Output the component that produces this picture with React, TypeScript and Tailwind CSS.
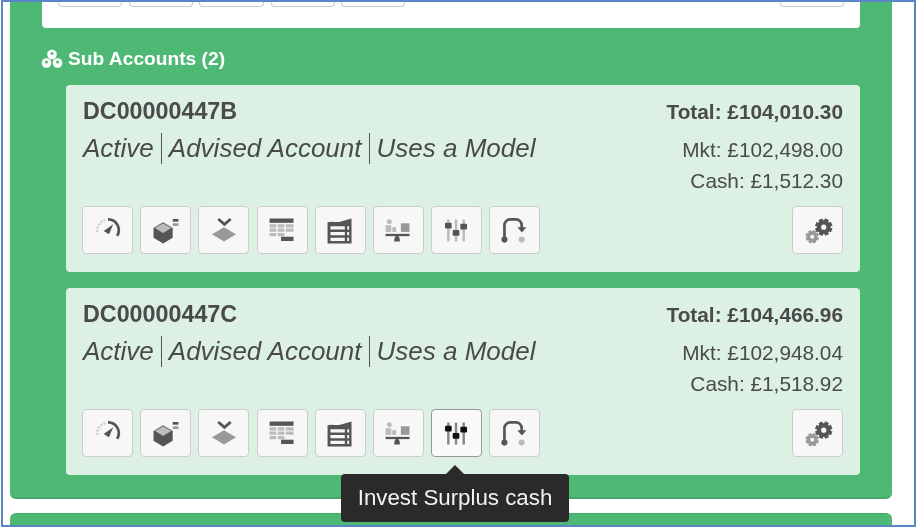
import type { ReactNode } from 'react'

const DARK = '#555'
const MID = '#999'
const LIGHT = '#bbb'

function IconSvg({ children }: { children: ReactNode }) {
  return (
    <svg viewBox="0 0 51 48" className="h-[46px] w-[49px] shrink-0">
      {children}
    </svg>
  )
}

const sliders = (line: string, knob: string) => (
  <>
    <path d="M17 13v23M25 13v23M33 13v23" stroke={line} strokeWidth="2.600" />
    <rect x="13.500" y="16.500" width="7" height="6" rx="1" fill={knob} />
    <rect x="21.500" y="24" width="7" height="6" rx="1" fill={knob} />
    <rect x="29.500" y="17.500" width="7" height="6" rx="1" fill={knob} />
  </>
)

const icons: ReactNode[] = [
  // gauge
  <>
    <path d="M26 13a11 11 0 0 1 9.500 17" fill="none" stroke={DARK} strokeWidth="2.800" />
    <path d="M15 26a11 11 0 0 1 9-12.500" fill="none" stroke="#ccc" strokeWidth="2.400" strokeDasharray="2 1.500" />
    <path d="M21.500 25l10-7-4.500 10.500z" fill={DARK} />
  </>,
  // cube with bars
  <>
    <path d="M13 22l10-6 10 6v10l-10 6-10-6z" fill={DARK} />
    <path d="M14.500 22l8.500-5 8.500 5-8.500 5z" fill="#bbb" />
    <rect x="33" y="12.500" width="6" height="2.800" fill={DARK} />
    <rect x="33" y="17" width="6" height="2.800" fill={MID} />
  </>,
  // chevron over diamond
  <>
    <path d="M20 12.500l6.500 5.500 6.500-5.500" fill="none" stroke={DARK} strokeWidth="3" />
    <path d="M26 21l12.500 7.500-12.500 7.500-12.500-7.500z" fill={MID} />
  </>,
  // table
  <>
    <rect x="12" y="12" width="25" height="4.500" fill={DARK} />
    <path d="M12 18h7v3.400h-7zM20.500 18h7v3.400h-7zM29 18h8v3.400h-8zM12 22.500h7v3.400h-7zM20.500 22.500h7v3.400h-7zM29 22.500h8v3.400h-8zM12 27h7v3.400h-7zM20.500 27h7v3.400h-7z" fill={LIGHT} />
    <rect x="24" y="31" width="13" height="4.500" fill={DARK} />
  </>,
  // wavy-top ledger
  <>
    <path d="M12 16c5-2 9 1 14-1 4-1 7-2 11-3v26H12z" fill={DARK} />
    <path d="M15 20h15v3.500H15zM15 26h15v3.500H15zM15 32h15v3.500H15zM32.500 20h2v3.500h-2zM32.500 26h2v3.500h-2zM32.500 32h2v3.500h-2z" fill="#f6f6f6" />
  </>,
  // balance
  <>
    <circle cx="16" cy="15.500" r="2.600" fill={LIGHT} />
    <rect x="12" y="19" width="6" height="7" fill={LIGHT} />
    <rect x="19" y="21" width="4" height="5" fill={LIGHT} />
    <rect x="28" y="17" width="9" height="9" fill={MID} />
    <rect x="12" y="28" width="25" height="2.400" fill={DARK} />
    <path d="M21 36c0-4 1-6 3-6s3 2 3 6z" fill={DARK} />
  </>,
  sliders(LIGHT, DARK),
  // route arrow
  <>
    <path d="M15 32V19a6 6 0 0 1 6-6h6a6 6 0 0 1 6 6v3" fill="none" stroke={DARK} strokeWidth="2.800" />
    <path d="M28.500 21h9.500l-4.750 5.500z" fill={DARK} />
    <circle cx="15" cy="34" r="3.200" fill={DARK} />
    <circle cx="33" cy="34" r="3.200" fill={LIGHT} />
  </>,
]

function Gear({ cx, cy, r, fill }: { cx: number; cy: number; r: number; fill: string }) {
  return (
    <g>
      <circle cx={cx} cy={cy} r={r * 0.55} fill="none" stroke={fill} strokeWidth={r * 0.5} />
      {[0, 45, 90, 135, 180, 225, 270, 315].map((deg) => (
        <rect
          key={deg}
          x={cx - r * 0.24}
          y={cy - r}
          width={r * 0.48}
          height={r * 0.4}
          fill={fill}
          transform={`rotate(${deg + 22} ${cx} ${cy})`}
        />
      ))}
    </g>
  )
}

function IconButton({ children, active }: { children: ReactNode; active?: boolean }) {
  return (
    <button
      className={
        active
          ? 'h-[48px] w-[51px] shrink-0 rounded border border-[#999] bg-[#fafafa]'
          : 'h-[48px] w-[51px] shrink-0 rounded border border-[#ccc] bg-[#f7f7f7]'
      }
    >
      {children}
    </button>
  )
}

function AccountCard({
  code,
  total,
  mkt,
  cash,
  activeIcon,
}: {
  code: string
  total: string
  mkt: string
  cash: string
  activeIcon?: number
}) {
  return (
    <div className="h-[187px] rounded bg-[#dcf1e4] px-[17px] pt-[13px] text-[#4a4a4a]">
      <div className="flex h-[108px] justify-between">
        <div>
          <div className="text-[23.300px] leading-[26px] font-bold">{code}</div>
          <div className="mt-[8px] flex items-center text-[26px] leading-[32px] italic">
            <span>Active</span>
            <span className="mx-[7px] h-[31px] w-px bg-[#555]" />
            <span>Advised Account</span>
            <span className="mx-[7px] h-[31px] w-px bg-[#555]" />
            <span>Uses a Model</span>
          </div>
        </div>
        <div className="text-right text-[20.800px]">
          <div className="mt-px leading-[26px] font-bold">Total: {total}</div>
          <div className="mt-[10px] leading-[30px]">Mkt: {mkt}</div>
          <div className="leading-[31px]">Cash: {cash}</div>
        </div>
      </div>
      <div className="flex justify-between">
        <div className="-ml-px flex gap-[7.200px]">
          {icons.map((icon, i) => (
            <IconButton key={i} active={activeIcon === i}>
              <IconSvg>{activeIcon === i ? sliders('#888', '#111') : icon}</IconSvg>
            </IconButton>
          ))}
        </div>
        <IconButton>
          <IconSvg>
            <Gear cx={32} cy={21} r={9} fill={DARK} />
            <Gear cx={20} cy={31} r={7} fill={MID} />
          </IconSvg>
        </IconButton>
      </div>
    </div>
  )
}

function StubButton({ className }: { className: string }) {
  return <div className={`h-[5px] rounded-b border-x border-b border-[#ccc] bg-white ${className}`} />
}

export default function App() {
  return (
    <div className="h-[527px] w-[917px] bg-white px-px blur-[0.35px] font-['Liberation_Sans',Arial,sans-serif]">
      <div className="relative h-full overflow-hidden border-2 border-[#5a86c4] pr-[22px] pl-[7px]">
        <div className="h-[497px] rounded-b-md border-b-2 border-[#46a868] bg-[#4eb974] px-[32px]">
          <div className="h-[26px] rounded-b bg-white">
            <div className="flex justify-between px-[16px]">
              <div className="flex gap-[6.500px]">
                <StubButton className="w-[64px]" />
                <StubButton className="w-[64px]" />
                <StubButton className="w-[65px]" />
                <StubButton className="w-[64px]" />
                <StubButton className="w-[64px]" />
              </div>
              <StubButton className="w-[64px]" />
            </div>
          </div>
          <div className="flex h-[57px] items-center gap-[5px] pt-[5px] text-[19.200px] font-bold text-white">
            <svg viewBox="0 0 22 20" className="-ml-px h-[20px] w-[22px]">
              <g fill="#fff">
                <circle cx="11" cy="5.500" r="4.800" />
                <circle cx="5.500" cy="14" r="4.800" />
                <circle cx="16.500" cy="14" r="4.800" />
              </g>
              <g fill="#4eb974">
                <circle cx="11" cy="4.500" r="1.500" />
                <circle cx="5.500" cy="13" r="1.500" />
                <circle cx="16.500" cy="13" r="1.500" />
              </g>
            </svg>
            <span>Sub Accounts (2)</span>
          </div>
          <div className="ml-[24px] flex flex-col gap-[16px]">
            <AccountCard code="DC00000447B" total="£104,010.30" mkt="£102,498.00" cash="£1,512.30" />
            <AccountCard code="DC00000447C" total="£104,466.96" mkt="£102,948.04" cash="£1,518.92" activeIcon={6} />
          </div>
        </div>
        <div className="mt-[14px] h-[20px] rounded-t-md border-t border-[#46a868] bg-[#4eb974]" />
        <div className="absolute top-[463px] left-[338px]">
          <div className="mx-auto h-0 w-0 border-x-[9px] border-b-[9px] border-x-transparent border-b-[#2a2a2a]" />
          <div className="flex h-[48px] w-[228px] items-center justify-center rounded bg-[#2a2a2a] text-[22.300px] text-[#f2f2f2]">
            Invest Surplus cash
          </div>
        </div>
      </div>
    </div>
  )
}
